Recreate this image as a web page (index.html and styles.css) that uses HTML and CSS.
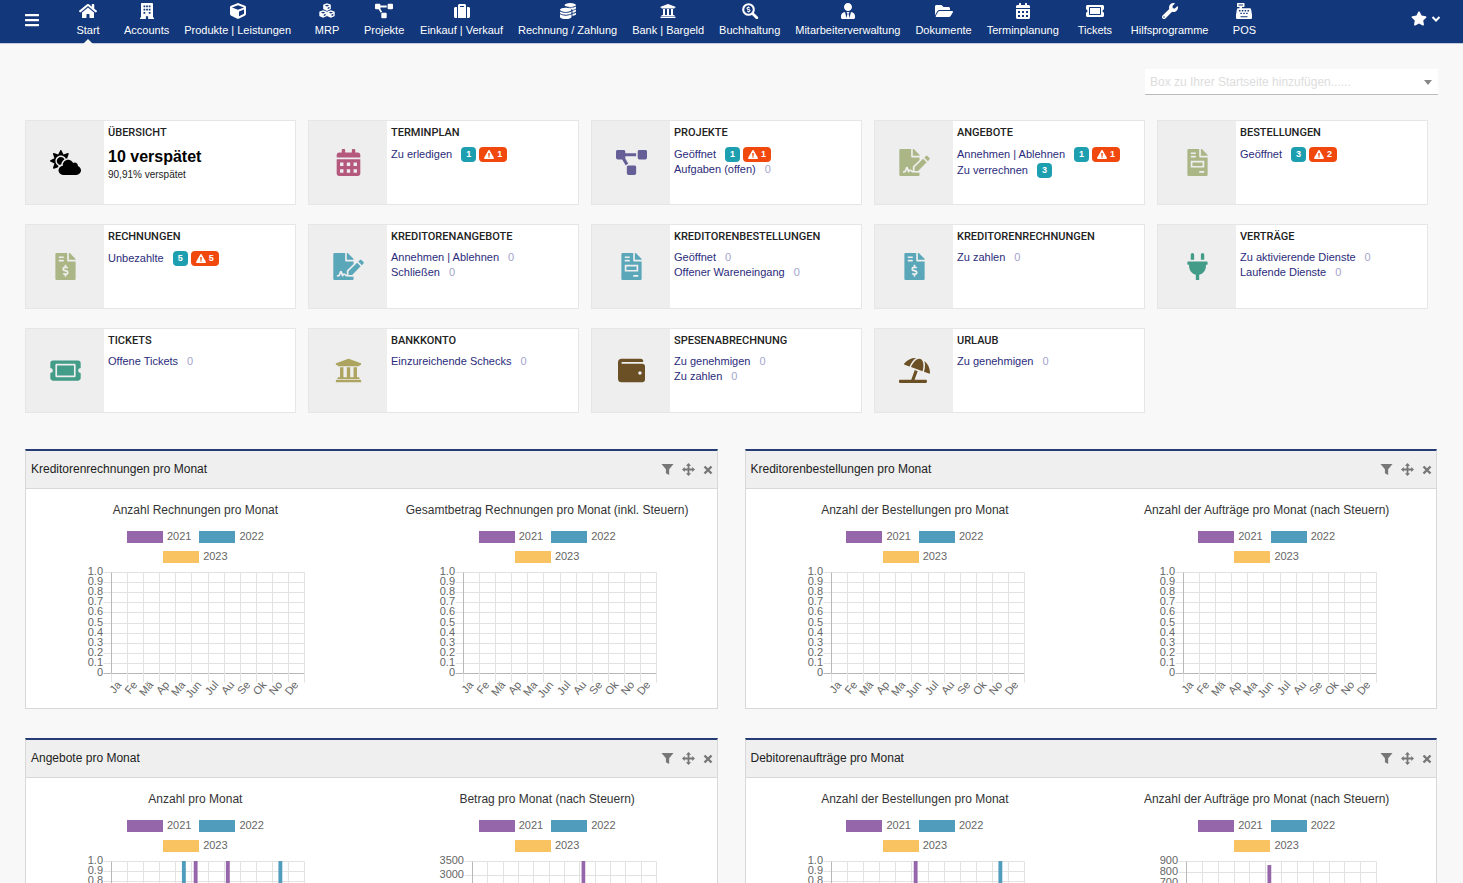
FILE: index.html
```
<!DOCTYPE html>
<html lang="de">
<head>
<meta charset="utf-8">
<title>Start</title>
<link rel="stylesheet" href="styles.css">
</head>
<body>
<svg class="sprite" aria-hidden="true">
  <symbol id="i-bars" viewBox="0 0 448 512"><path d="M16 132h416c9 0 16-7 16-16V76c0-9-7-16-16-16H16C7 60 0 67 0 76v40c0 9 7 16 16 16zm0 160h416c9 0 16-7 16-16v-40c0-9-7-16-16-16H16c-9 0-16 7-16 16v40c0 9 7 16 16 16zm0 160h416c9 0 16-7 16-16v-40c0-9-7-16-16-16H16c-9 0-16 7-16 16v40c0 9 7 16 16 16z"/></symbol>
  <symbol id="i-home" viewBox="0 0 576 512"><path d="M280.37 148.26L96 300.11V464a16 16 0 0 0 16 16l112.06-.29a16 16 0 0 0 15.92-16V368a16 16 0 0 1 16-16h64a16 16 0 0 1 16 16v95.64a16 16 0 0 0 16 16.05L464 480a16 16 0 0 0 16-16V300L295.67 148.26a12.19 12.19 0 0 0-15.3 0zM571.6 251.47L488 182.56V44.05a12 12 0 0 0-12-12h-56a12 12 0 0 0-12 12v72.61L318.47 43a48 48 0 0 0-61 0L4.34 251.47a12 12 0 0 0-1.6 16.9l25.5 31A12 12 0 0 0 45.15 301l235.22-193.74a12.19 12.19 0 0 1 15.3 0L530.9 301a12 12 0 0 0 16.9-1.6l25.5-31a12 12 0 0 0-1.7-16.93z"/></symbol>
  <symbol id="i-building" viewBox="0 0 448 512"><path fill-rule="evenodd" d="M12 464h20V24C32 11 43 0 56 0h336c13 0 24 11 24 24v440h20c7 0 12 5 12 12v36H260v-92h-72v92H0v-36c0-7 5-12 12-12zM112 76v56h56V76zm84 0v56h56V76zm84 0v56h56V76zM112 180v56h56v-56zm84 0v56h56v-56zm84 0v56h56v-56zM112 284v56h56v-56zm168 0v56h56v-56z"/></symbol>
  <symbol id="i-cube" viewBox="0 0 512 512"><path d="M239.1 6.3l-208 78c-18.7 7-31.1 25-31.1 45v225.1c0 18.2 10.3 34.8 26.5 42.9l208 104c13.5 6.8 29.4 6.8 42.9 0l208-104c16.3-8.1 26.5-24.8 26.5-42.9V129.3c0-20-12.4-37.9-31.1-44.9l-208-78C262 2.2 250 2.2 239.1 6.3zM256 68.4l192 72v1.1l-192 78-192-78v-1.1l192-72zm32 356V275.5l160-65v133.9l-160 80z"/></symbol>
  <symbol id="i-cubes" viewBox="0 0 512 512"><g id="minicube"><path fill-rule="evenodd" d="M256 8l110 40q12 6 12 18v116q0 12-12 18l-110 52-110-52q-12-6-12-18V66q0-12 12-18zM256 54l-70 26 70 30 70-30zM278 148v50l58-27v-48z"/></g><use href="#minicube" x="-124" y="222"/><use href="#minicube" x="124" y="222"/></symbol>
  <symbol id="i-project" viewBox="0 0 640 512"><path d="M384 320H256c-17.67 0-32 14.33-32 32v128c0 17.67 14.33 32 32 32h128c17.67 0 32-14.33 32-32V352c0-17.67-14.33-32-32-32zM192 32c0-17.67-14.33-32-32-32H32C14.33 0 0 14.33 0 32v128c0 17.67 14.33 32 32 32h95.72l73.16 128.04C211.98 300.98 232.4 288 256 288h.28L192 175.51V128h224V64H192V32zM608 0H480c-17.67 0-32 14.33-32 32v128c0 17.67 14.33 32 32 32h128c17.67 0 32-14.33 32-32V32c0-17.67-14.33-32-32-32z"/></symbol>
  <symbol id="i-suitcase" viewBox="0 0 512 512"><path fill-rule="evenodd" d="M128 480h256V80c0-26-22-48-48-48H176c-26 0-48 22-48 48zM192 96h128v32H192zM512 176v256c0 26-22 48-48 48h-48V128h48c26 0 48 22 48 48zM96 480H48c-26 0-48-22-48-48V176c0-26 22-48 48-48h48z"/></symbol>
  <symbol id="i-coins" viewBox="0 0 512 512"><ellipse cx="328" cy="64" rx="184" ry="62"/><path d="M0 218c0-36 82-66 184-66s184 30 184 66-82 66-184 66S0 254 0 218zM0 268c40 30 110 42 184 42s144-12 184-42v44c0 36-82 64-184 64S0 348 0 312zM0 362c40 30 110 44 184 44s144-14 184-44v84c0 36-82 66-184 66S0 482 0 446zM144 112c40 26 110 38 184 38s144-12 184-38v44c0 28-52 54-122 62-16-44-100-78-200-86-24-4-46-12-46-20zM400 246c44-6 84-18 112-36v46c0 26-46 50-112 60zM400 344c44-6 84-18 112-36v46c0 28-46 52-112 60z"/></symbol>
  <symbol id="i-bank" viewBox="0 0 512 512"><path d="M496 128v16a8 8 0 0 1-8 8h-24v12c0 6.627-5.373 12-12 12H60c-6.627 0-12-5.373-12-12v-12H24a8 8 0 0 1-8-8v-16a8 8 0 0 1 4.941-7.392l232-88a7.996 7.996 0 0 1 6.118 0l232 88A8 8 0 0 1 496 128zm-24 304H40c-13.255 0-24 10.745-24 24v16a8 8 0 0 0 8 8h464a8 8 0 0 0 8-8v-16c0-13.255-10.745-24-24-24zM96 192v192H60c-6.627 0-12 5.373-12 12v20h416v-20c0-6.627-5.373-12-12-12h-36V192h-64v192h-64V192h-64v192h-64V192H96z"/></symbol>
  <symbol id="i-searchdollar" viewBox="0 0 512 512"><g fill="none" stroke="currentColor"><circle cx="208" cy="208" r="170" stroke-width="66"/><path d="M345 345L474 474" stroke-width="88" stroke-linecap="round"/><path d="M250 160c-60-24-90-12-90 14 0 46 96 22 96 68 0 30-40 38-94 14M208 112v36M208 268v36" stroke-width="34"/></g></symbol>
  <symbol id="i-usertie" viewBox="0 0 448 512"><path d="M224 256c70.7 0 128-57.3 128-128S294.7 0 224 0 96 57.3 96 128s57.3 128 128 128zm95.8 32.6L272 480l-32-136 32-56h-96l32 56-32 136-47.8-191.4C56.9 292 0 350.3 0 422.4V464c0 26.5 21.5 48 48 48h352c26.5 0 48-21.5 48-48v-41.6c0-72.1-56.9-130.4-128.2-133.8z"/></symbol>
  <symbol id="i-folder" viewBox="0 0 576 512"><path d="M572.694 292.093L500.27 416.248A63.997 63.997 0 0 1 444.989 448H45.025c-18.523 0-30.064-20.093-20.731-36.093l72.424-124.155A64 64 0 0 1 152 256h399.964c18.523 0 30.064 20.093 20.73 36.093zM152 224h328v-48c0-26.51-21.49-48-48-48H272l-64-64H48C21.49 64 0 85.49 0 112v278.046l69.077-118.418C86.214 242.25 117.989 224 152 224z"/></symbol>
  <symbol id="i-calendar" viewBox="0 0 448 512"><path fill-rule="evenodd" d="M0 464c0 26.500 21.500 48 48 48h352c26.500 0 48-21.500 48-48V192H0zM64 256h64v64H64zm128 0h64v64h-64zm128 0h64v64h-64zM64 384h64v64H64zm128 0h64v64h-64zm128 0h64v64h-64zM400 64h-48V16c0-8.800-7.200-16-16-16h-32c-8.800 0-16 7.200-16 16v48H160V16c0-8.800-7.200-16-16-16h-32c-8.800 0-16 7.200-16 16v48H48C21.500 64 0 85.500 0 112v48h448v-48c0-26.500-21.500-48-48-48z"/></symbol>
  <symbol id="i-ticket" viewBox="0 0 576 512"><path d="M128 160h320v192H128V160zm400 96c0 26.510 21.490 48 48 48v96c0 26.510-21.490 48-48 48H48c-26.510 0-48-21.490-48-48v-96c26.510 0 48-21.490 48-48s-21.490-48-48-48v-96c0-26.510 21.490-48 48-48h480c26.510 0 48 21.490 48 48v96c-26.510 0-48 21.490-48 48zm-48-104c0-13.255-10.745-24-24-24H120c-13.255 0-24 10.745-24 24v208c0 13.255 10.745 24 24 24h336c13.255 0 24-10.745 24-24V152z"/></symbol>
  <symbol id="i-wrench" viewBox="0 0 512 512"><path d="M507.730 109.100c-2.240-9.030-13.540-12.090-20.120-5.510l-74.360 74.360-67.880-11.310-11.310-67.880 74.360-74.360c6.620-6.620 3.430-17.900-5.660-20.160-47.380-11.740-99.550.91-136.580 37.930-39.640 39.640-50.550 97.100-34.050 147.200L18.740 402.760c-24.990 24.990-24.990 65.510 0 90.500 24.990 24.990 65.510 24.990 90.500 0l213.210-213.210c50.120 16.710 107.470 5.680 147.370-34.220 37.070-37.070 49.700-89.320 37.910-136.730zM64 472c-13.250 0-24-10.750-24-24 0-13.260 10.750-24 24-24s24 10.740 24 24c0 13.250-10.750 24-24 24z"/></symbol>
  <symbol id="i-register" viewBox="0 0 512 512"><path fill-rule="evenodd" d="M48 0h208c9 0 16 7 16 16v96c0 9-7 16-16 16h-64v40h248c22 0 40 16 44 38l28 170v96c0 22-18 40-40 40H40c-22 0-40-18-40-40v-96l28-170c4-22 22-38 44-38h40v-40H48c-9 0-16-7-16-16V16C32 7 39 0 48 0zM80 44v36h144V44zM96 224v44h48v-44zm90 0v44h48v-44zm90 0v44h48v-44zm90 0v44h48v-44zM140 308v44h48v-44zm92 0v44h48v-44zm92 0v44h48v-44zM144 420v36h224v-36z"/></symbol>
  <symbol id="i-star" viewBox="0 0 576 512"><path d="M259.300 17.800L194 150.200 47.900 171.500c-26.200 3.800-36.700 36.100-17.700 54.600l105.700 103-25 145.500c-4.500 26.300 23.200 46 46.400 33.700L288 439.600l130.700 68.700c23.200 12.200 50.900-7.400 46.400-33.700l-25-145.500 105.700-103c19-18.500 8.500-50.800-17.700-54.600L382 150.200 316.700 17.800c-11.700-23.600-45.600-23.900-57.400 0z"/></symbol>
  <symbol id="i-chevron" viewBox="0 0 10 10"><path d="M1.500 3L5 6.500 8.500 3" fill="none" stroke="currentColor" stroke-width="2"/></symbol>
  <symbol id="i-warn" viewBox="0 0 576 512"><path d="M569.517 440.013C587.975 472.007 564.806 512 527.940 512H48.054c-36.937 0-59.999-40.055-41.577-71.987L246.423 23.985c18.467-32.009 64.720-31.951 83.154 0l239.940 416.028zM288 354c-25.405 0-46 20.595-46 46s20.595 46 46 46 46-20.595 46-46-20.595-46-46-46zm-43.673-165.346l7.418 136c.347 6.364 5.609 11.346 11.982 11.346h48.546c6.373 0 11.635-4.982 11.982-11.346l7.418-136c.375-6.874-5.098-12.654-11.982-12.654h-63.383c-6.884 0-12.356 5.780-11.981 12.654z"/></symbol>
  <symbol id="i-cloudsun" viewBox="0 0 640 512"><path d="M575.200 325.700c.2-1.900.8-3.700.8-5.600 0-35.300-28.700-64-64-64-12.600 0-24.200 3.800-34.100 10-17.600-38.800-56.500-66-101.900-66-61.800 0-112 50.100-112 112 0 3 .7 5.800.9 8.700-49.600 3.700-88.900 44.700-88.900 95.300 0 53 43 96 96 96h272c53 0 96-43 96-96 0-42.100-27.200-77.400-64.800-90.400zm-430.400-22.600c-43.700-43.700-43.700-114.700 0-158.300 43.700-43.700 114.700-43.700 158.400 0 9.700 9.700 16.900 20.900 22.300 32.700 9.800-3.700 20.100-6 30.700-7.500L386 81.100c4-11.900-7.300-23.100-19.200-19.200L279 91.200 237.500 8.400C232-2.800 216-2.800 210.400 8.400L169 91.200 81.100 61.900C69.300 58 58 69.300 61.900 81.100l29.300 87.800-82.800 41.500c-11.200 5.600-11.200 21.500 0 27.100l82.800 41.400-29.300 87.800c-4 11.900 7.300 23.100 19.200 19.200l76.100-25.300c6.100-12.400 14-23.700 23.600-33.500-13-5.400-25.400-13.400-36-24zm-4.800-79.200c0 40.800 29.300 74.800 67.900 82.300 8-4.700 16.300-8.800 25.200-11.700 5.400-44.300 31-82.500 67.400-105C287.300 160.400 258 140 224 140c-46.300 0-84 37.600-84 83.900z"/></symbol>
  <symbol id="i-signature" viewBox="0 0 576 512"><path d="M218.170 424.140c-2.950-5.920-8.090-6.520-10.170-6.520s-7.220.59-10.020 6.190l-7.670 15.340c-6.370 12.780-25.030 11.370-29.480-2.090L144 386.590l-10.610 31.880c-5.890 17.660-22.380 29.530-41 29.530H80c-8.840 0-16-7.160-16-16s7.160-16 16-16h12.390c4.830 0 9.110-3.080 10.640-7.660l18.190-54.640c3.300-9.810 12.440-16.410 22.780-16.410s19.480 6.590 22.770 16.410l13.880 41.640c19.750-16.190 54.060-9.700 66 14.160 1.890 3.780 5.490 5.950 9.360 6.260v-82.120l128-127.090V160H248c-13.200 0-24-10.800-24-24V0H24C10.700 0 0 10.700 0 24v464c0 13.300 10.700 24 24 24h336c13.300 0 24-10.700 24-24v-40l-128-.11c-16.120-.31-30.580-9.280-37.830-23.750zM384 121.900c0-6.300-2.500-12.400-7-16.900L279.100 7c-4.500-4.500-10.600-7-17-7H256v128h128v-6.100zm-96 225.060V416h68.990l161.680-162.780-67.880-67.880L288 346.960zm280.540-179.630l-31.870-31.870c-9.940-9.940-26.070-9.940-36.010 0l-27.250 27.250 67.880 67.880 27.250-27.250c9.950-9.940 9.950-26.070 0-36.010z"/></symbol>
  <symbol id="i-invoice" viewBox="0 0 384 512"><path fill-rule="evenodd" d="M377 105L279 7c-5-5-11-7-17-7h-6v128h128v-6c0-6-3-12-7-17zM224 136V0H24C11 0 0 11 0 24v464c0 13 11 24 24 24h336c13 0 24-11 24-24V160H248c-13 0-24-11-24-24zM64 64h96v32H64zm0 64h96v32H64zm256 320h-96v-32h96zm0-224v128H64V224zM96 256v64h192v-64z"/></symbol>
  <symbol id="i-invoicedollar" viewBox="0 0 384 512"><path d="M377 105L279.100 7c-4.500-4.500-10.600-7-17-7H256v128h128v-6.100c0-6.300-2.500-12.400-7-16.900zm-153 31V0H24C10.700 0 0 10.700 0 24v464c0 13.300 10.700 24 24 24h336c13.300 0 24-10.700 24-24V160H248c-13.200 0-24-10.800-24-24zM64 72c0-4.420 3.580-8 8-8h80c4.420 0 8 3.580 8 8v16c0 4.420-3.580 8-8 8H72c-4.420 0-8-3.580-8-8V72zm0 80v-16c0-4.420 3.580-8 8-8h80c4.420 0 8 3.580 8 8v16c0 4.420-3.580 8-8 8H72c-4.420 0-8-3.580-8-8zm144 263.880V440c0 4.420-3.580 8-8 8h-16c-4.420 0-8-3.580-8-8v-24.290c-11.290-.58-22.270-4.520-31.370-11.350-3.900-2.930-4.100-8.770-.57-12.140l11.750-11.210c2.770-2.640 6.890-2.760 10.130-.73 3.870 2.420 8.260 3.720 12.820 3.720h28.110c6.500 0 11.800-5.920 11.800-13.190 0-5.950-3.610-11.190-8.770-12.730l-45-13.500c-18.590-5.580-31.580-23.420-31.580-43.390 0-24.520 19.050-44.440 42.670-45.070V232c0-4.420 3.580-8 8-8h16c4.420 0 8 3.580 8 8v24.290c11.290.58 22.270 4.510 31.370 11.350 3.900 2.930 4.100 8.770.57 12.140l-11.750 11.210c-2.770 2.640-6.890 2.760-10.130.73-3.870-2.430-8.260-3.720-12.820-3.720h-28.110c-6.500 0-11.800 5.920-11.800 13.190 0 5.950 3.610 11.190 8.770 12.730l45 13.500c18.590 5.580 31.580 23.420 31.580 43.390 0 24.530-19.050 44.440-42.670 45.070z"/></symbol>
  <symbol id="i-plug" viewBox="0 0 384 512"><path d="M320 32a32 32 0 0 0-64 0v96h64zm48 128H16a16 16 0 0 0-16 16v32a16 16 0 0 0 16 16h16v32a160 160 0 0 0 128 156.800V512h64v-99.200A160 160 0 0 0 352 256v-32h16a16 16 0 0 0 16-16v-32a16 16 0 0 0-16-16zM128 32a32 32 0 0 0-64 0v96h64z"/></symbol>
  <symbol id="i-wallet" viewBox="0 0 512 512"><path d="M461.200 128H80c-8.840 0-16-7.160-16-16s7.160-16 16-16h384c8.840 0 16-7.160 16-16 0-26.510-21.490-48-48-48H64C28.650 32 0 60.650 0 96v320c0 35.350 28.650 64 64 64h397.200c28.020 0 50.800-21.530 50.800-48V176c0-26.470-22.780-48-50.800-48zM416 336c-17.670 0-32-14.330-32-32s14.330-32 32-32 32 14.330 32 32-14.330 32-32 32z"/></symbol>
  <symbol id="i-beach" viewBox="0 0 640 512"><path d="M115.380 136.900l102.110 37.180c35.190-81.540 86.210-144.290 139-173.700-95.880-4.890-188.780 36.960-248.530 111.800-6.690 8.400-2.660 21.050 7.420 24.720zm132.250 48.160l238.480 86.830c35.760-121.380 18.700-231.660-42.630-253.980-7.400-2.700-15.130-4-23.090-4-58.020.01-128.270 69.170-172.760 171.150zM521.480 60.500c6.220 16.300 10.830 34.600 13.200 55.190 5.740 49.890-1.420 108.230-18.950 166.980l102.620 37.360c10.090 3.670 21.310-3.430 21.570-14.170 2.320-95.690-41.910-187.440-118.440-245.360zM560 447.980H321.060L386 269.500l-60.140-21.900-72.900 200.370H16c-8.840 0-16 7.160-16 16.010v32.010C0 504.830 7.160 512 16 512h544c8.840 0 16-7.170 16-16.010v-32.010c0-8.840-7.160-16-16-16z"/></symbol>
  <symbol id="i-filter" viewBox="0 0 14 14"><path d="M0.500 1h13L8.800 6.800V13L5.300 11V6.800z"/></symbol>
  <symbol id="i-move" viewBox="0 0 14 14"><path d="M7 0l2.800 3H8v3h3V4.200L14 7l-3 2.800V8H8v3h1.800L7 14l-2.800-3H6V8H3v1.800L0 7l3-2.800V6h3V3H4.200z"/></symbol>
  <symbol id="i-times" viewBox="0 0 10 10"><path d="M1.500 1.500l7 7M8.500 1.500l-7 7" fill="none" stroke="currentColor" stroke-width="2.400"/></symbol>
</svg>

<header class="topbar">
  <button class="burger" type="button" aria-label="Menü"><svg class="icon-burger"><use href="#i-bars"/></svg></button>
  <nav class="menu">
    <a class="menu-item is-active" href="#"><svg class="icon-menu"><use href="#i-home"/></svg><span>Start</span></a>
    <a class="menu-item" href="#"><svg class="icon-menu"><use href="#i-building"/></svg><span>Accounts</span></a>
    <a class="menu-item" href="#"><svg class="icon-menu"><use href="#i-cube"/></svg><span>Produkte | Leistungen</span></a>
    <a class="menu-item" href="#"><svg class="icon-menu"><use href="#i-cubes"/></svg><span>MRP</span></a>
    <a class="menu-item" href="#"><svg class="icon-menu"><use href="#i-project"/></svg><span>Projekte</span></a>
    <a class="menu-item" href="#"><svg class="icon-menu"><use href="#i-suitcase"/></svg><span>Einkauf | Verkauf</span></a>
    <a class="menu-item" href="#"><svg class="icon-menu"><use href="#i-coins"/></svg><span>Rechnung / Zahlung</span></a>
    <a class="menu-item" href="#"><svg class="icon-menu"><use href="#i-bank"/></svg><span>Bank | Bargeld</span></a>
    <a class="menu-item" href="#"><svg class="icon-menu"><use href="#i-searchdollar"/></svg><span>Buchhaltung</span></a>
    <a class="menu-item" href="#"><svg class="icon-menu"><use href="#i-usertie"/></svg><span>Mitarbeiterverwaltung</span></a>
    <a class="menu-item" href="#"><svg class="icon-menu"><use href="#i-folder"/></svg><span>Dokumente</span></a>
    <a class="menu-item" href="#"><svg class="icon-menu"><use href="#i-calendar"/></svg><span>Terminplanung</span></a>
    <a class="menu-item" href="#"><svg class="icon-menu"><use href="#i-ticket"/></svg><span>Tickets</span></a>
    <a class="menu-item" href="#"><svg class="icon-menu"><use href="#i-wrench"/></svg><span>Hilfsprogramme</span></a>
    <a class="menu-item" href="#"><svg class="icon-menu"><use href="#i-register"/></svg><span>POS</span></a>
  </nav>
  <button class="bookmarks" type="button" aria-label="Lesezeichen"><svg class="icon-star"><use href="#i-star"/></svg><svg class="icon-chevron"><use href="#i-chevron"/></svg></button>
</header>

<main class="page">
  <div class="toolbar">
    <div class="boxpicker">
      <select class="boxpicker-select" aria-label="Box hinzufügen"><option>Box zu Ihrer Startseite hinzufügen......</option></select>
      <span class="boxpicker-arrow"></span>
    </div>
  </div>

  <section class="cards">
    <article class="card"><div class="card-icon tone-black"><svg class="icon-card"><use href="#i-cloudsun"/></svg></div><div class="card-body"><h2 class="card-title">Übersicht</h2><p class="late">10 verspätet</p><p class="late-share">90,91% verspätet</p></div></article>
    <article class="card"><div class="card-icon tone-rose"><svg class="icon-card"><use href="#i-calendar"/></svg></div><div class="card-body"><h2 class="card-title">Terminplan</h2><a class="line" href="#">Zu erledigen <span class="badges"><b class="badge">1</b><b class="badge badge-warn"><svg class="icon-warn"><use href="#i-warn"/></svg>1</b></span></a></div></article>
    <article class="card"><div class="card-icon tone-violet"><svg class="icon-card"><use href="#i-project"/></svg></div><div class="card-body"><h2 class="card-title">Projekte</h2><a class="line" href="#">Geöffnet <span class="badges"><b class="badge">1</b><b class="badge badge-warn"><svg class="icon-warn"><use href="#i-warn"/></svg>1</b></span></a><a class="line" href="#">Aufgaben (offen) <span class="zero">0</span></a></div></article>
    <article class="card"><div class="card-icon tone-olive"><svg class="icon-card"><use href="#i-signature"/></svg></div><div class="card-body"><h2 class="card-title">Angebote</h2><a class="line" href="#">Annehmen | Ablehnen <span class="badges"><b class="badge">1</b><b class="badge badge-warn"><svg class="icon-warn"><use href="#i-warn"/></svg>1</b></span></a><a class="line" href="#">Zu verrechnen <span class="badges"><b class="badge">3</b></span></a></div></article>
    <article class="card"><div class="card-icon tone-olive"><svg class="icon-card"><use href="#i-invoice"/></svg></div><div class="card-body"><h2 class="card-title">Bestellungen</h2><a class="line" href="#">Geöffnet <span class="badges"><b class="badge">3</b><b class="badge badge-warn"><svg class="icon-warn"><use href="#i-warn"/></svg>2</b></span></a></div></article>

    <article class="card"><div class="card-icon tone-olive"><svg class="icon-card"><use href="#i-invoicedollar"/></svg></div><div class="card-body"><h2 class="card-title">Rechnungen</h2><a class="line" href="#">Unbezahlte <span class="badges"><b class="badge">5</b><b class="badge badge-warn"><svg class="icon-warn"><use href="#i-warn"/></svg>5</b></span></a></div></article>
    <article class="card"><div class="card-icon tone-blue"><svg class="icon-card"><use href="#i-signature"/></svg></div><div class="card-body"><h2 class="card-title">Kreditorenangebote</h2><a class="line" href="#">Annehmen | Ablehnen <span class="zero">0</span></a><a class="line" href="#">Schließen <span class="zero">0</span></a></div></article>
    <article class="card"><div class="card-icon tone-blue"><svg class="icon-card"><use href="#i-invoice"/></svg></div><div class="card-body"><h2 class="card-title">Kreditorenbestellungen</h2><a class="line" href="#">Geöffnet <span class="zero">0</span></a><a class="line" href="#">Offener Wareneingang <span class="zero">0</span></a></div></article>
    <article class="card"><div class="card-icon tone-blue"><svg class="icon-card"><use href="#i-invoicedollar"/></svg></div><div class="card-body"><h2 class="card-title">Kreditorenrechnungen</h2><a class="line" href="#">Zu zahlen <span class="zero">0</span></a></div></article>
    <article class="card"><div class="card-icon tone-green"><svg class="icon-card"><use href="#i-plug"/></svg></div><div class="card-body"><h2 class="card-title">Verträge</h2><a class="line" href="#">Zu aktivierende Dienste <span class="zero">0</span></a><a class="line" href="#">Laufende Dienste <span class="zero">0</span></a></div></article>

    <article class="card"><div class="card-icon tone-green"><svg class="icon-card"><use href="#i-ticket"/></svg></div><div class="card-body"><h2 class="card-title">Tickets</h2><a class="line" href="#">Offene Tickets <span class="zero">0</span></a></div></article>
    <article class="card"><div class="card-icon tone-sand"><svg class="icon-card"><use href="#i-bank"/></svg></div><div class="card-body"><h2 class="card-title">Bankkonto</h2><a class="line" href="#">Einzureichende Schecks <span class="zero">0</span></a></div></article>
    <article class="card"><div class="card-icon tone-brown"><svg class="icon-card"><use href="#i-wallet"/></svg></div><div class="card-body"><h2 class="card-title">Spesenabrechnung</h2><a class="line" href="#">Zu genehmigen <span class="zero">0</span></a><a class="line" href="#">Zu zahlen <span class="zero">0</span></a></div></article>
    <article class="card"><div class="card-icon tone-brown"><svg class="icon-card"><use href="#i-beach"/></svg></div><div class="card-body"><h2 class="card-title">Urlaub</h2><a class="line" href="#">Zu genehmigen <span class="zero">0</span></a></div></article>
  </section>

  <section class="panels">
    <article class="panel">
      <header class="panel-head"><h2 class="panel-title">Kreditorenrechnungen pro Monat</h2></header>
      <div class="panel-body">
        <figure class="chart" data-max="1"><figcaption class="chart-title">Anzahl Rechnungen pro Monat</figcaption></figure>
        <figure class="chart" data-max="1"><figcaption class="chart-title">Gesamtbetrag Rechnungen pro Monat (inkl. Steuern)</figcaption></figure>
      </div>
    </article>
    <article class="panel">
      <header class="panel-head"><h2 class="panel-title">Kreditorenbestellungen pro Monat</h2></header>
      <div class="panel-body">
        <figure class="chart" data-max="1"><figcaption class="chart-title">Anzahl der Bestellungen pro Monat</figcaption></figure>
        <figure class="chart" data-max="1"><figcaption class="chart-title">Anzahl der Aufträge pro Monat (nach Steuern)</figcaption></figure>
      </div>
    </article>
    <article class="panel">
      <header class="panel-head"><h2 class="panel-title">Angebote pro Monat</h2></header>
      <div class="panel-body">
        <figure class="chart" data-max="1" data-bars="4:1:1 5:0:1 7:0:1 10:1:1"><figcaption class="chart-title">Anzahl pro Monat</figcaption></figure>
        <figure class="chart" data-max="3500" data-bars="7:0:3500"><figcaption class="chart-title">Betrag pro Monat (nach Steuern)</figcaption></figure>
      </div>
    </article>
    <article class="panel">
      <header class="panel-head"><h2 class="panel-title">Debitorenaufträge pro Monat</h2></header>
      <div class="panel-body">
        <figure class="chart" data-max="1" data-bars="5:0:1 10:1:1"><figcaption class="chart-title">Anzahl der Bestellungen pro Monat</figcaption></figure>
        <figure class="chart" data-max="900" data-bars="5:0:864"><figcaption class="chart-title">Anzahl der Aufträge pro Monat (nach Steuern)</figcaption></figure>
      </div>
    </article>
  </section>
</main>
<script src="charts.js"></script>
</body>
</html>
```

FILE: styles.css
```
* { box-sizing: border-box; }

html { scrollbar-width: none; }

body {
  margin: 0;
  background: #f8f8f8;
  color: #222;
  font: 12px/15px "Liberation Sans", Arial, sans-serif;
}

h2, p, figure, ul { margin: 0; padding: 0; }
a { color: inherit; text-decoration: none; }
svg { display: block; fill: currentColor; }
button { border: 0; padding: 0; background: none; color: inherit; font: inherit; }
.sprite { position: absolute; width: 0; height: 0; }

/* top bar */
.topbar {
  display: flex;
  height: 44px;
  background: #12377a;
  border-bottom: 1px solid #c4cbdc;
  color: #fff;
}
.burger { flex: none; width: 60px; padding: 0 0 4px 24px; display: flex; align-items: center; }
.icon-burger { width: 16px; height: 16px; }
.menu { display: flex; gap: 1px; }
.menu-item {
  position: relative;
  display: flex;
  flex-direction: column;
  align-items: center;
  gap: 4px;
  min-width: 56px;
  padding: 3px 7px 0;
  font-size: 11px;
  white-space: nowrap;
}
.is-active::after {
  content: "";
  position: absolute;
  bottom: -1px;
  left: 50%;
  margin-left: -5px;
  border: 5px solid transparent;
  border-top: 0;
  border-bottom-color: #f8f8f8;
}
.icon-menu { width: 18px; height: 16px; }
.bookmarks { display: flex; align-items: center; gap: 4px; margin-left: auto; padding: 0 22px 6px 0; }
.icon-star { width: 16px; height: 15px; }
.icon-chevron { width: 10px; height: 10px; }

/* page */
.page { padding: 25px 25px 30px; }
.toolbar { display: flex; justify-content: flex-end; margin-bottom: 25px; }
.boxpicker { position: relative; width: 293px; }
.boxpicker-select {
  display: block;
  width: 100%;
  height: 26px;
  padding: 2px 20px 0 5px;
  appearance: none;
  border: 0;
  border-bottom: 1px solid #bbb;
  border-radius: 0;
  background: #fff;
  color: #ddd;
  font: inherit;
}
.boxpicker-arrow {
  position: absolute;
  top: 11px;
  right: 6px;
  border: 4px solid transparent;
  border-top: 5px solid #888;
  border-bottom: 0;
}

/* cards */
.cards { display: grid; grid-template-columns: repeat(5, 1fr); gap: 19px 12px; margin-right: 10px; }
.card { display: flex; min-height: 85px; border: 1px solid #e6e6e6; background: #fff; }
.card-icon { flex: none; display: flex; align-items: center; justify-content: center; width: 78px; background: #eee; }
.icon-card { width: 31px; height: 27px; }
.card-body { flex: 1; min-width: 0; padding: 4px; white-space: nowrap; }
.card-title { margin-bottom: 6px; font: 500 11px/15px Roboto, "Liberation Sans", sans-serif; text-transform: uppercase; }
.line { display: flex; align-items: center; min-height: 15px; color: #2b2b7b; font-size: 11px; }
.badges { display: flex; gap: 3px; margin-left: 9px; height: 16px; align-items: center; }
.badge {
  display: flex;
  align-items: center;
  justify-content: center;
  gap: 3px;
  min-width: 15px;
  height: 15px;
  padding: 0 5px;
  border-radius: 4px;
  background: #1e9fb0;
  color: #fff;
  font-size: 9px;
}
.badge-warn { background: #f1480e; }
.icon-warn { width: 10px; height: 9px; }
.zero { margin-left: 9px; color: #a3a3cc; }
.late { margin-top: 7px; color: #000; font: bold 16px/20px "Liberation Sans", Arial, sans-serif; }
.late-share { font-size: 10px; }
.tone-black { color: #000; }
.tone-rose { color: #b4587c; }
.tone-violet { color: #655f98; }
.tone-olive { color: #abb686; }
.tone-blue { color: #5ba7ba; }
.tone-green { color: #429c87; }
.tone-sand { color: #aca45f; }
.tone-brown { color: #6b5026; }

/* chart panels */
.panels { display: grid; grid-template-columns: 1fr 1fr; gap: 29px 27px; margin: 36px 1px 0 0; }
.panel { border: 1px solid #d8d8d8; border-top: 2px solid #263c74; background: #fff; }
.panel-head {
  display: flex;
  align-items: center;
  justify-content: space-between;
  height: 38px;
  padding: 0 4px 0 5px;
  border-bottom: 1px solid #d8d8d8;
  background: #efefef;
}
.panel-title { font-size: 12px; font-weight: normal; }
.panel-tools { display: flex; align-items: center; gap: 8px; color: #777; }
.icon-tool { width: 13px; height: 13px; }
.icon-close { width: 10px; height: 10px; }
.panel-body { display: grid; grid-template-columns: 1fr 1fr; gap: 13px; padding: 14px 0 5px; }
.chart { display: flex; flex-direction: column; align-items: center; }
.chart-title { color: #333; white-space: nowrap; }
.legend {
  display: flex;
  flex-wrap: wrap;
  justify-content: center;
  gap: 8px;
  width: 150px;
  margin: 13px 0 1px;
  list-style: none;
  color: #666;
  font-size: 11px;
  line-height: 10px;
}
.legend-item { display: flex; gap: 4px; }
.swatch { width: 36px; height: 12px; }
.series-0 { background: #9566a9; fill: #9566a9; }
.series-1 { background: #4f9cbc; fill: #4f9cbc; }
.series-2 { background: #f9c362; fill: #f9c362; }
.plot { width: 222px; height: 139px; fill: #666; font-size: 11px; }
.grid { stroke: #e2e2e2; }
.axis { stroke: #b8b8b8; }
```

FILE: charts.js
```
const months = ["Ja", "Fe", "Mä", "Ap", "Ma", "Jun", "Jul", "Au", "Se", "Ok", "No", "De"];
const scales = {
  1: { left: 27, ticks: ["0", "0.1", "0.2", "0.3", "0.4", "0.5", "0.6", "0.7", "0.8", "0.9", "1.0"] },
  900: { left: 30, ticks: ["0", "100", "200", "300", "400", "500", "600", "700", "800", "900"] },
  3500: { left: 36, ticks: ["0", "500", "1000", "1500", "2000", "2500", "3000", "3500"] }
};
const right = 220, top0 = 8, bottom = 109;

function plot(max, bars) {
  const { left, ticks } = scales[max];
  const col = (right - left) / 12;
  const line = (x1, y1, x2, y2, name) =>
    `<path class="${name}" d="M${x1 + 0.5} ${y1 + 0.5}L${x2 + 0.5} ${y2 + 0.5}"/>`;
  let out = "";
  ticks.forEach((label, i) => {
    const y = Math.round(bottom - (bottom - top0) * i / (ticks.length - 1));
    out += line(left - 8, y, right, y, i ? "grid" : "axis");
    out += `<text x="${left - 8}" y="${y + 3}" text-anchor="end">${label}</text>`;
  });
  for (let i = 0; i <= 12; i++) {
    const x = Math.round(left + col * i);
    out += line(x, top0, x, bottom + 9, "grid");
    if (i < 12) {
      const cx = Math.round(x + col / 2) + 3;
      out += `<text text-anchor="end" transform="translate(${cx} 121) rotate(-50)">${months[i]}</text>`;
    }
  }
  out += line(left, top0, left, bottom, "axis");
  bars.forEach(([month, series, value]) => {
    const h = (bottom - top0) * value / max;
    const x = left + 0.5 + col * (month + 0.1 + series * 0.8 / 3) + 0.2;
    out += `<rect class="series-${series}" x="${x}" y="${bottom - h}" width="${col * 0.24}" height="${h}"/>`;
  });
  return `<svg class="plot" viewBox="0 0 222 139">${out}</svg>`;
}

const legend = `<ul class="legend">${["2021", "2022", "2023"].map((year, i) =>
  `<li class="legend-item"><span class="swatch series-${i}"></span>${year}</li>`).join("")}</ul>`;

document.querySelectorAll(".chart").forEach((chart) => {
  const bars = (chart.dataset.bars || "").split(" ").filter(Boolean).map((b) => b.split(":").map(Number));
  chart.insertAdjacentHTML("beforeend", legend + plot(chart.dataset.max, bars));
});

const tools = [["filter", "Filter", "icon-tool"], ["move", "Verschieben", "icon-tool"], ["times", "Schließen", "icon-close"]];
document.querySelectorAll(".panel-head").forEach((head) => {
  head.insertAdjacentHTML("beforeend", `<div class="panel-tools">${tools.map(([id, label, size]) =>
    `<button type="button" aria-label="${label}"><svg class="${size}"><use href="#i-${id}"/></svg></button>`).join("")}</div>`);
});
```
